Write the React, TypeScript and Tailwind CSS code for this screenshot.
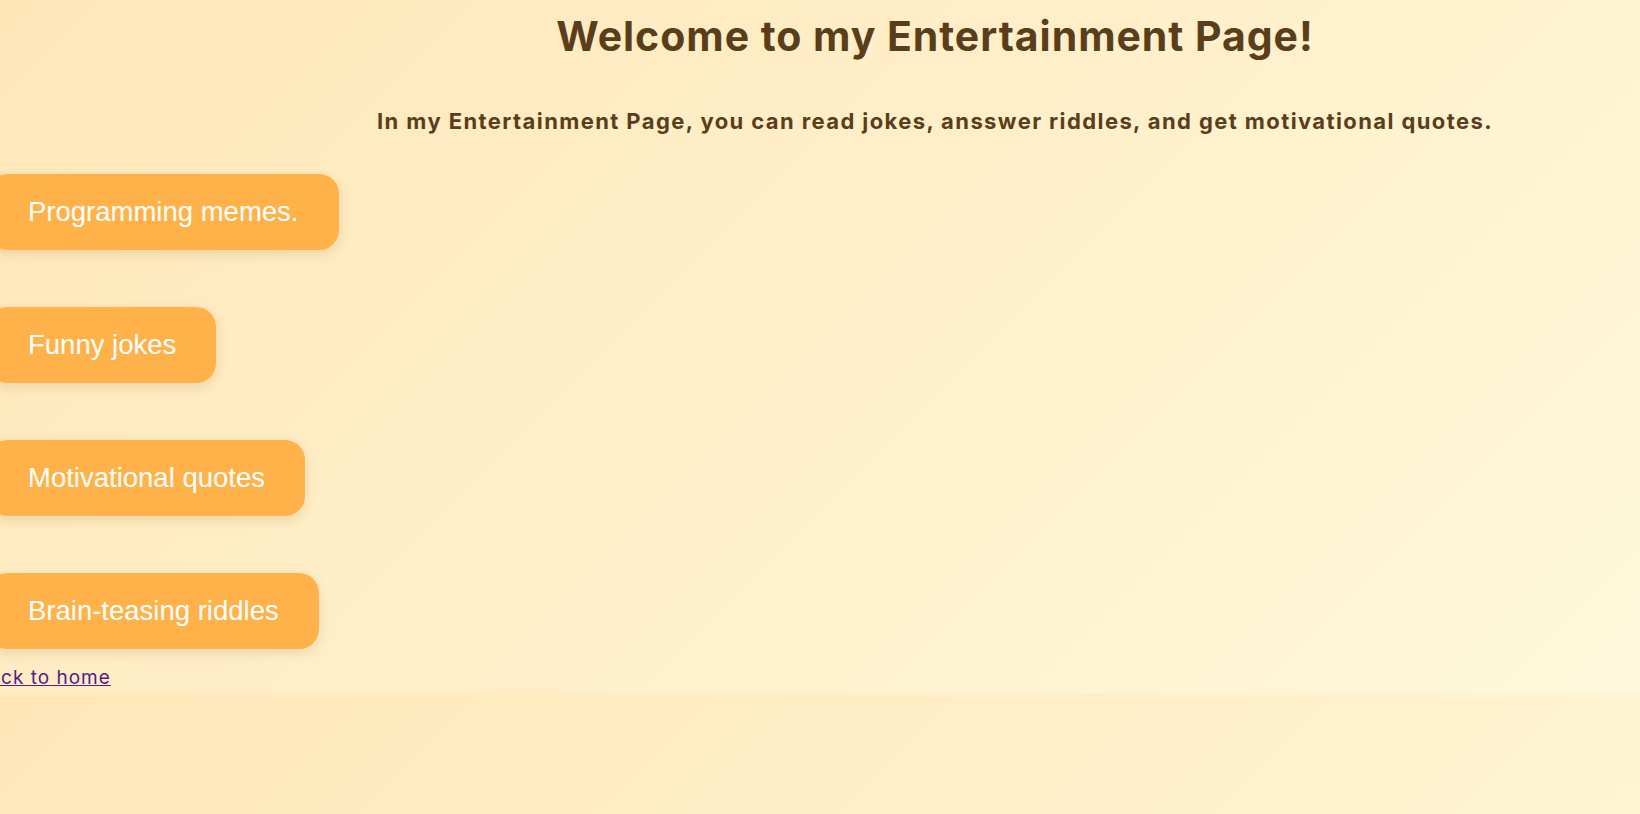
const options = [
  "Programming memes.",
  "Funny jokes",
  "Motivational quotes",
  "Brain-teasing riddles",
];

export default function App() {
  return (
    <div className="h-screen overflow-hidden bg-[linear-gradient(135deg,#ffe7b8,#fff8dc)] bg-[length:100%_693px] bg-repeat font-['Inter',sans-serif]">
      <div className="h-[693px] flex flex-col">
        <h1 className="mt-[12px] pl-[230px] text-center text-[41px] leading-[48px] tracking-[0.95px] font-bold text-[#5a3e1b]">
          Welcome to my Entertainment Page!
        </h1>
        <h3 className="mt-[48px] pl-[230px] text-center text-[22px] leading-[26px] tracking-[1.4px] font-bold text-[#5a3e1b]">
          In my Entertainment Page, you can read jokes, ansswer riddles, and get motivational quotes.
        </h3>
        <div className="mt-[40px] -ml-[12px] flex flex-col items-start gap-[57px]">
          {options.map((label) => (
            <button
              key={label}
              className="h-[76px] px-[40px] flex items-center rounded-[20px] bg-[#ffb24a] text-white text-[27.5px] font-['Liberation_Sans',Arial,sans-serif] shadow-[0_4px_12px_rgba(120,80,0,0.15)]"
            >
              {label}
            </button>
          ))}
        </div>
        <a
          href="#"
          className="mt-[18px] -ml-[24px] self-start text-[19px] leading-[22px] tracking-[1px] text-[#551a8b] underline"
        >
          Back to home
        </a>
      </div>
    </div>
  );
}
